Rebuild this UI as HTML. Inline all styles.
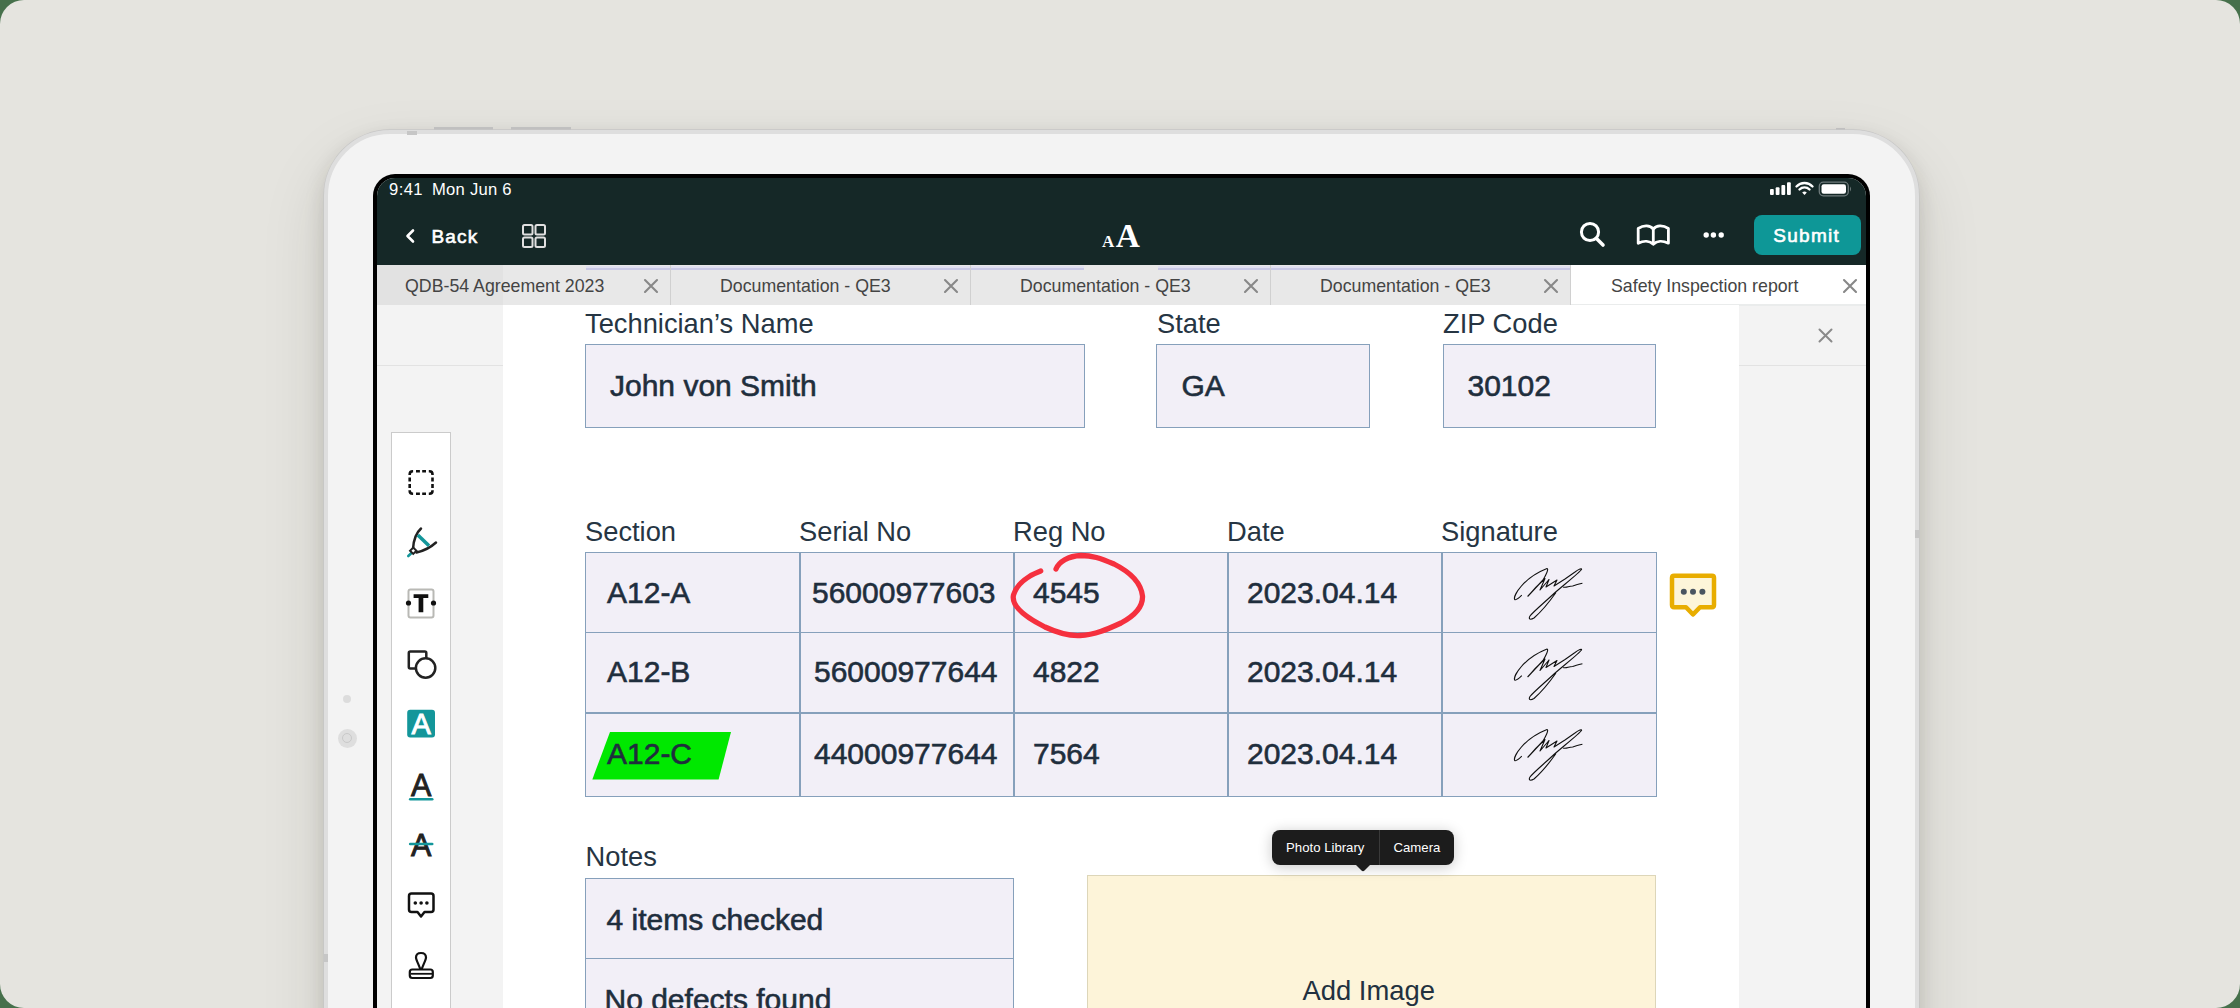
<!DOCTYPE html>
<html><head><meta charset="utf-8">
<style>
*{box-sizing:border-box;margin:0;padding:0}
html,body{width:2240px;height:1008px;overflow:hidden;background:#46704b}
body{font-family:"Liberation Sans",sans-serif;position:relative}
.a{position:absolute}
.t{position:absolute;white-space:nowrap;line-height:1}
#bg{position:absolute;left:0;top:0;width:2240px;height:1008px;background:#e5e4df;border-radius:24px;overflow:hidden}
#frame{position:absolute;left:324px;top:130px;width:1595px;height:1000px;background:#f3f3f3;border:4px solid #dedede;border-radius:66px;box-shadow:0 0 0 0.7px #c6c6c6,0 8px 20px rgba(40,35,20,0.15),0 28px 64px rgba(40,35,20,0.13)}
#screen{position:absolute;left:373px;top:174px;width:1497px;height:900px;background:#000;border-radius:22px}
#inner{position:absolute;left:377px;top:178px;width:1489px;height:900px;background:#f3f3f3;border-radius:18px 18px 0 0;overflow:hidden}
.w{color:#fff}
.tabt{font-size:17.75px;color:#444;top:278.3px}
.sep{position:absolute;top:265px;width:1px;height:40px;background:#d0d0d0}
.lbl{font-size:27.3px;color:#263543}
.val{font-size:30px;color:#1f2e3d;-webkit-text-stroke:0.6px #1f2e3d}
.box{position:absolute;background:#f2eff7;border:1.5px solid #86a0bb}
.hl{position:absolute;background:#86a0bb}
</style></head><body>
<div id="bg">
  <!-- frame buttons -->
  <div class="a" style="left:434px;top:127px;width:59px;height:6px;background:#c8c8c8"></div>
  <div class="a" style="left:511px;top:127px;width:60px;height:6px;background:#c8c8c8"></div>
  <div class="a" style="left:1836px;top:128px;width:9px;height:6px;background:#c8c8c8"></div>
  <div id="frame"></div>
  <div class="a" style="left:407px;top:131px;width:10px;height:4px;background:#c6c6c6"></div>
  <div class="a" style="left:1915px;top:530px;width:4px;height:8px;background:#c6c6c6"></div>
  <div class="a" style="left:324px;top:954px;width:4px;height:8px;background:#c6c6c6"></div>
  <!-- camera -->
  <div class="a" style="left:343px;top:695px;width:8px;height:8px;border-radius:50%;background:#dcdcdc"></div>
  <div class="a" style="left:337.5px;top:728.5px;width:19px;height:19px;border-radius:50%;background:#dedede"></div>
  <div class="a" style="left:342px;top:733px;width:10px;height:10px;border-radius:50%;border:1px solid #c9c9c9"></div>
</div>
<div id="screen"></div>
<div id="inner"></div>

<!-- NAV -->
<div class="a" style="left:377px;top:178px;width:1489px;height:87px;background:#152827;border-radius:18px 18px 0 0"></div>
<div class="t w" style="left:389px;top:181.5px;font-size:16.6px;letter-spacing:0.4px">9:41</div>
<div class="t w" style="left:432px;top:181.5px;font-size:16.6px;letter-spacing:0.25px">Mon Jun 6</div>
<!-- status icons -->
<svg class="a" style="left:1765px;top:178px" width="95" height="22" viewBox="0 0 95 22">
  <rect x="5" y="11" width="3.8" height="6" rx="1" fill="#fff"/>
  <rect x="10.7" y="9.2" width="3.8" height="7.8" rx="1" fill="#fff"/>
  <rect x="16.4" y="6.9" width="3.8" height="10.1" rx="1" fill="#fff"/>
  <rect x="22" y="4.3" width="3.8" height="12.7" rx="1" fill="#fff"/>
  <path d="M31.5,8.5 A11,11 0 0 1 47.5,8.5" stroke="#fff" stroke-width="2.4" fill="none" stroke-linecap="round"/>
  <path d="M34.5,11.5 A7,7 0 0 1 44.5,11.5" stroke="#fff" stroke-width="2.4" fill="none" stroke-linecap="round"/>
  <path d="M37.2,14.6 L39.5,17 L41.8,14.6 A3.3,3.3 0 0 0 37.2,14.6 Z" fill="#fff"/>
  <rect x="54.3" y="4.2" width="29" height="13.6" rx="4" fill="none" stroke="#6f7b7c" stroke-width="1.3"/>
  <rect x="56.5" y="6.3" width="24.5" height="9.4" rx="2.2" fill="#fff"/>
  <path d="M85,8.5 Q87,11 85,13.5 Z" fill="#6f7b7c"/>
</svg>
<!-- back -->
<svg class="a" style="left:400px;top:225px" width="20" height="22" viewBox="0 0 20 22">
  <path d="M13,5.5 L7.5,11 L13,16.5" stroke="#fff" stroke-width="2.6" fill="none" stroke-linecap="round" stroke-linejoin="round"/>
</svg>
<div class="t w" style="left:431.5px;top:226.8px;font-size:19px;letter-spacing:1.15px;-webkit-text-stroke:0.6px #fff">Back</div>
<svg class="a" style="left:520px;top:222px" width="28" height="28" viewBox="0 0 28 28">
  <rect x="3" y="3" width="9.5" height="9.5" rx="1.5" fill="none" stroke="#e0e0e0" stroke-width="2"/>
  <rect x="15.5" y="3" width="9.5" height="9.5" rx="1.5" fill="none" stroke="#e0e0e0" stroke-width="2"/>
  <rect x="3" y="15.5" width="9.5" height="9.5" rx="1.5" fill="none" stroke="#e0e0e0" stroke-width="2"/>
  <rect x="15.5" y="15.5" width="9.5" height="9.5" rx="1.5" fill="none" stroke="#e0e0e0" stroke-width="2"/>
</svg>
<!-- AA logo -->
<div class="t w" style="left:1102px;top:232.5px;font-family:'Liberation Serif',serif;font-weight:bold;font-size:17px">A</div>
<div class="t w" style="left:1115.8px;top:218.7px;font-family:'Liberation Serif',serif;font-weight:bold;font-size:33.4px">A</div>
<!-- search/book/more -->
<svg class="a" style="left:1575px;top:217px" width="160" height="36" viewBox="0 0 160 36">
  <circle cx="15" cy="15" r="8.6" stroke="#fff" stroke-width="3" fill="none"/>
  <path d="M21.5,21.5 L28,28" stroke="#fff" stroke-width="3.6" stroke-linecap="round"/>
  <path d="M63.2,11.5 C69,7.8 75,8.3 78.3,12 C81.6,8.3 87.6,7.8 93.4,11.5 L93.4,26.2 C87.6,23.3 81.6,23.8 78.3,27.2 C75,23.8 69,23.3 63.2,26.2 Z" stroke="#fff" stroke-width="2.8" fill="none" stroke-linejoin="round"/>
  <path d="M78.3,12 L78.3,26.5" stroke="#fff" stroke-width="2.8"/>
  <circle cx="131.2" cy="18" r="2.7" fill="#fff"/>
  <circle cx="138.4" cy="18" r="2.7" fill="#fff"/>
  <circle cx="146.2" cy="18" r="2.7" fill="#fff"/>
</svg>
<div class="a" style="left:1753.5px;top:215px;width:107.5px;height:40px;background:#0e9797;border-radius:8px"></div>
<div class="t w" style="left:1773.2px;top:226.2px;font-size:19px;letter-spacing:1.3px;-webkit-text-stroke:0.6px #fff">Submit</div>

<!-- TAB BAR -->
<div class="a" style="left:377px;top:265px;width:1489px;height:40px;background:#e8e8e8"></div>
<div class="a" style="left:377px;top:265px;width:126px;height:40px;background:#e2e2e2"></div>
<div class="a" style="left:1570px;top:265px;width:296px;height:40px;background:#fff"></div>
<div class="a" style="left:586px;top:265.5px;width:497.5px;height:2px;background:#e0e0f0"></div>
<div class="a" style="left:586px;top:267.5px;width:497.5px;height:2px;background:#c9c9e6"></div>
<div class="a" style="left:1157.5px;top:265.5px;width:412.5px;height:2px;background:#e0e0f0"></div>
<div class="a" style="left:1157.5px;top:267.5px;width:412.5px;height:2px;background:#c9c9e6"></div>
<div class="a" style="left:1570px;top:304px;width:296px;height:1.5px;background:#eaecec"></div>
<div class="sep" style="left:670px"></div>
<div class="sep" style="left:970px"></div>
<div class="sep" style="left:1270px"></div>
<div class="sep" style="left:1570px"></div>
<div class="t tabt" style="left:405px">QDB-54 Agreement 2023</div>
<div class="t tabt" style="left:720px">Documentation - QE3</div>
<div class="t tabt" style="left:1020px">Documentation - QE3</div>
<div class="t tabt" style="left:1320px">Documentation - QE3</div>
<div class="t tabt" style="left:1611px">Safety Inspection report</div>
<svg class="a" style="left:0;top:0;pointer-events:none" width="2240" height="1008" viewBox="0 0 2240 1008">
  <g stroke="#888" stroke-width="2.1" stroke-linecap="round">
    <path d="M645,280 L657,292 M657,280 L645,292"/>
    <path d="M945,280 L957,292 M957,280 L945,292"/>
    <path d="M1245,280 L1257,292 M1257,280 L1245,292"/>
    <path d="M1545,280 L1557,292 M1557,280 L1545,292"/>
    <path d="M1844,280 L1856,292 M1856,280 L1844,292"/>
  </g>
</svg>

<!-- CONTENT -->
<div class="a" style="left:377px;top:365px;width:126px;height:1px;background:#e2e2e2"></div>
<div class="a" style="left:503px;top:305px;width:1236px;height:703px;background:#fff"></div>
<div class="a" style="left:1739px;top:365px;width:127px;height:1px;background:#e2e2e2"></div>
<svg class="a" style="left:1812px;top:322px" width="28" height="28" viewBox="0 0 28 28">
  <path d="M7.5,7.5 L19.5,19.5 M19.5,7.5 L7.5,19.5" stroke="#8a8a8a" stroke-width="2" stroke-linecap="round"/>
</svg>

<!-- TOOLBAR -->
<div class="a" style="left:391px;top:432px;width:60px;height:600px;background:#fff;border:1.5px solid #cbcbcb"></div>
<svg class="a" style="left:391px;top:432px" width="60" height="576" viewBox="391 432 60 576">
  <path d="M409.7,475.1 L409.7,474.3 Q409.7,471.3 412.7,471.3 L413.1,471.3 M428.8,471.3 L429.5,471.3 Q432.5,471.3 432.5,474.3 L432.5,475.1 M432.5,490.3 L432.5,490.8 Q432.5,493.8 429.5,493.8 L428.8,493.8 M413.1,493.8 L412.7,493.8 Q409.7,493.8 409.7,490.8 L409.7,490.3 M416,471.3 H419.9 M422.2,471.3 H426 M416,493.8 H419.9 M422.2,493.8 H426 M409.7,477.5 V481.5 M409.7,483.9 V488 M432.5,477.5 V481.5 M432.5,483.9 V488" fill="none" stroke="#111" stroke-width="2.6" stroke-linecap="butt"/>
  <path d="M421,528.5 C416,533 413.5,540 413,549" stroke="#222" stroke-width="2.5" fill="none" stroke-linecap="round"/>
  <path d="M416.5,552.5 C423,551 430,548 436,542.5" stroke="#222" stroke-width="2.5" fill="none" stroke-linecap="round"/>
  <path d="M417.8,535 L429,545.8" stroke="#13969a" stroke-width="3.6"/>
  <path d="M411.5,553 L408.3,556" stroke="#13969a" stroke-width="2.6" stroke-linecap="round"/>
  <rect x="411" y="548.5" width="4.5" height="4.5" transform="rotate(45 413.25 550.75)" fill="#fff" stroke="#222" stroke-width="2"/>
  <rect x="408.5" y="589.5" width="25" height="28" rx="2" fill="none" stroke="#b9b9b5" stroke-width="2"/>
  <path d="M413.6,594.2 H428.3 V598 H423.3 V612.2 H418.6 V598 H413.6 Z" fill="#111"/>
  <circle cx="408.5" cy="603" r="2.6" fill="#111"/>
  <circle cx="433.5" cy="603" r="2.6" fill="#111"/>
  <rect x="408.8" y="651.5" width="17.5" height="17" rx="1.5" fill="none" stroke="#222" stroke-width="2.5"/>
  <circle cx="425.6" cy="668" r="9.7" fill="#fff" stroke="#222" stroke-width="2.5"/>
  <rect x="407.2" y="709.8" width="27.8" height="27.7" rx="3" fill="#13969a"/>
  <text x="421.1" y="734" text-anchor="middle" font-family="Liberation Sans" font-size="29" fill="#fff" stroke="#fff" stroke-width="0.9">A</text>
  <text x="421.2" y="795.5" text-anchor="middle" font-family="Liberation Sans" font-size="30.5" fill="#222" stroke="#222" stroke-width="0.9">A</text>
  <rect x="408.9" y="798" width="24.6" height="2.6" rx="1.3" fill="#13969a"/>
  <text x="421.2" y="855.5" text-anchor="middle" font-family="Liberation Sans" font-size="30.5" fill="#222" stroke="#222" stroke-width="0.9">A</text>
  <rect x="408.9" y="842.7" width="24.6" height="2.6" rx="1.3" fill="#13969a"/>
  <path d="M411.5,893.5 L431,893.5 Q433.5,893.5 433.5,896 L433.5,909.5 Q433.5,912 431,912 L424.5,912 L421,916.5 L417.5,912 L411.5,912 Q409,912 409,909.5 L409,896 Q409,893.5 411.5,893.5 Z" fill="none" stroke="#111" stroke-width="2.5" stroke-linejoin="round"/>
  <circle cx="415.3" cy="903" r="1.8" fill="#111"/>
  <circle cx="421.1" cy="903" r="1.8" fill="#111"/>
  <circle cx="426.9" cy="903" r="1.8" fill="#111"/>
  <path d="M421,953 C424.5,953 426,955 426,957.5 C426,960 423,965 422,968.5 L420,968.5 C419,965 416,960 416,957.5 C416,955 417.5,953 421,953 Z" fill="none" stroke="#111" stroke-width="2.2" stroke-linejoin="round"/>
  <rect x="409.8" y="969.5" width="23" height="8.5" rx="2.5" fill="none" stroke="#111" stroke-width="2.2"/>
  <path d="M411,973.8 L432,973.8" stroke="#111" stroke-width="1.8"/>
</svg>

<!-- FORM -->
<div class="t lbl" style="left:585px;top:309.5px">Technician&rsquo;s Name</div>
<div class="t lbl" style="left:1157px;top:309.5px">State</div>
<div class="t lbl" style="left:1443px;top:309.5px">ZIP Code</div>
<div class="box" style="left:585px;top:344px;width:500px;height:84px"></div>
<div class="box" style="left:1156px;top:344px;width:214px;height:84px"></div>
<div class="box" style="left:1443px;top:344px;width:213px;height:84px"></div>
<div class="t val" style="left:610px;top:370.6px">John von Smith</div>
<div class="t val" style="left:1181.5px;top:370.6px">GA</div>
<div class="t val" style="left:1467.5px;top:370.6px">30102</div>

<!-- TABLE -->
<div class="t lbl" style="left:585px;top:517.5px">Section</div>
<div class="t lbl" style="left:799px;top:517.5px">Serial No</div>
<div class="t lbl" style="left:1013px;top:517.5px">Reg No</div>
<div class="t lbl" style="left:1227px;top:517.5px">Date</div>
<div class="t lbl" style="left:1441px;top:517.5px">Signature</div>
<div class="box" style="left:585px;top:551.5px;width:1071.5px;height:245px"></div>
<div class="hl" style="left:799px;top:552px;width:1.5px;height:244px"></div>
<div class="hl" style="left:1013px;top:552px;width:1.5px;height:244px"></div>
<div class="hl" style="left:1227px;top:552px;width:1.5px;height:244px"></div>
<div class="hl" style="left:1441px;top:552px;width:1.5px;height:244px"></div>
<div class="hl" style="left:586px;top:631.5px;width:1070px;height:1.5px"></div>
<div class="hl" style="left:586px;top:712px;width:1070px;height:1.5px"></div>

<!-- highlight -->
<svg class="a" style="left:0;top:0" width="2240" height="1008" viewBox="0 0 2240 1008">
  <path d="M610,732 L731,732 L718.6,779.5 L592.3,779.5 Z" fill="#00e800"/>
</svg>

<div class="t val" style="left:607px;top:577.6px">A12-A</div>
<div class="t val" style="left:812px;top:577.6px">56000977603</div>
<div class="t val" style="left:1033px;top:577.6px">4545</div>
<div class="t val" style="left:1247px;top:577.6px">2023.04.14</div>

<div class="t val" style="left:607px;top:657.4px">A12-B</div>
<div class="t val" style="left:814px;top:657.4px">56000977644</div>
<div class="t val" style="left:1033px;top:657.4px">4822</div>
<div class="t val" style="left:1247px;top:657.4px">2023.04.14</div>

<div class="t val" style="left:607px;top:738.9px">A12-C</div>
<div class="t val" style="left:814px;top:738.9px">44000977644</div>
<div class="t val" style="left:1033px;top:738.9px">7564</div>
<div class="t val" style="left:1247px;top:738.9px">2023.04.14</div>

<!-- red circle + signatures + chat -->
<svg class="a" style="left:0;top:0" width="2240" height="1008" viewBox="0 0 2240 1008">
  <path d="M1040.7,571 C1030,575 1017,583 1013.5,595 C1011,606 1025,617 1045,627 C1060,634 1070,636 1080,635.5 C1095,635 1108,629 1121,623 C1136,615 1143,606 1142.5,596 C1141,583 1130,572 1114,564 C1100,558 1092,555.5 1081,555.5 C1068,556 1059,562 1056,569" stroke="#f5303e" stroke-width="5.3" fill="none" stroke-linecap="round"/>
  <defs>
    <g id="sig">
      <path d="M16.8,35.2 C14,38 11,40.5 9.7,39.5 C8,36 18,18 42,8.5 C44,9 41,15 38,20 L22.6,36.5 M22.6,36.5 C28,30 34,24 40,18.5 L35,30 L44,19.5 L41,27 L52,20 L49,26 L60,19 L70,12 C74,9 77,8 76.5,9.5 C75,12 60,24 49,33.5 C40,42 29,51 25,56 C23,59.5 25.5,60 29,58 C37,51 45,41 51,32.5 M58,27 C62,28 63,26 67.7,26 C70,25 74,24 77.4,23.2" stroke="#111" stroke-width="1.1" fill="none" stroke-linejoin="round"/>
    </g>
  </defs>
  <use href="#sig" x="1505" y="560"/>
  <use href="#sig" x="1505" y="640.5"/>
  <use href="#sig" x="1505" y="721"/>
  <g>
    <path d="M1674,575.8 L1712,575.8 Q1714,575.8 1714,577.8 L1714,605 Q1714,607.2 1712,607.2 L1700,607.2 L1693,614.5 L1686,607.2 L1674,607.2 Q1672,607.2 1672,605 L1672,577.8 Q1672,575.8 1674,575.8 Z" fill="#fdf5d9" stroke="#e8ad00" stroke-width="4.5" stroke-linejoin="round"/>
    <circle cx="1683.8" cy="591.8" r="3" fill="#4a5560"/>
    <circle cx="1693" cy="591.8" r="3" fill="#4a5560"/>
    <circle cx="1702.4" cy="591.8" r="3" fill="#4a5560"/>
  </g>
</svg>

<!-- NOTES -->
<div class="t lbl" style="left:585.5px;top:843px">Notes</div>
<div class="box" style="left:585px;top:877.5px;width:429px;height:160px"></div>
<div class="hl" style="left:586px;top:957.5px;width:428px;height:1.5px"></div>
<div class="t val" style="left:606.5px;top:905.2px">4 items checked</div>
<div class="t val" style="left:604.5px;top:984.6px">No defects found</div>

<!-- ADD IMAGE -->
<div class="a" style="left:1086.5px;top:875px;width:569.5px;height:200px;background:#fdf4d9;border:1.5px solid #ddd6b9"></div>
<div class="t" style="left:1302.5px;top:976.5px;font-size:27.4px;color:#22313f">Add Image</div>

<!-- POPUP -->
<div class="a" style="left:1272px;top:829.5px;width:182px;height:35px;background:#1c1c1c;border-radius:8px;box-shadow:0 2px 14px rgba(0,0,0,0.22)"></div>
<svg class="a" style="left:1352px;top:863px" width="22" height="10" viewBox="0 0 22 10"><path d="M2,0 L9.5,7.5 Q11,9 12.5,7.5 L20,0 Z" fill="#1c1c1c"/></svg>
<div class="a" style="left:1379px;top:829.5px;width:1px;height:35px;background:#3a3a3a"></div>
<div class="t w" style="left:1286px;top:840.8px;font-size:13.2px">Photo Library</div>
<div class="t w" style="left:1393.5px;top:840.8px;font-size:13.2px">Camera</div>
</body></html>
